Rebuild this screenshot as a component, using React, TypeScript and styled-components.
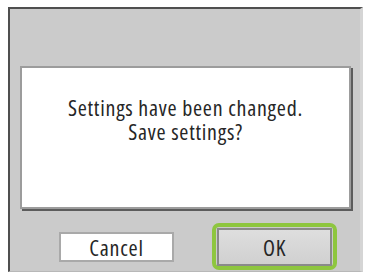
import React from "react";
import styled, { createGlobalStyle } from "styled-components";

const Global = createGlobalStyle`
  html, body { margin: 0; padding: 0; background: #ffffff; }
  body { font-family: "Open Sans", "DejaVu Sans", sans-serif; }
`;

const Screen = styled.div`
  box-sizing: border-box;
  margin: 7px 0 0 8px;
  width: 355px;
  height: 265px;
  background: #cbcbcb;
  border-left: 2px solid #4f4f4f;
  border-top: 2px solid #4f4f4f;
  border-right: 3px solid #d5d5d5;
  border-bottom: 1px solid #b8b8b8;
  padding: 57px 7px 0 10px;
  display: flex;
  flex-direction: column;
`;

const Dialog = styled.div`
  box-sizing: border-box;
  width: 331px;
  height: 143px;
  background: #ffffff;
  border: 2px solid #9c9c9c;
  box-shadow: 2px 2px 0 #5c5c5c;
  padding-top: 27px;
  text-align: center;
`;

const Message = styled.p`
  margin: 0;
  white-space: nowrap;
  color: #262626;
  font-family: "Open Sans", "DejaVu Sans", sans-serif;
  font-stretch: condensed;
  font-size: 22px;
  letter-spacing: 0.75px;
  line-height: 24px;
`;

const ButtonRow = styled.div`
  margin-top: 14px;
  height: 47px;
  display: flex;
  align-items: center;
  padding-left: 39px;
  gap: 38px;
`;

const Button = styled.div<{ $selected?: boolean }>`
  box-sizing: border-box;
  display: flex;
  align-items: center;
  justify-content: center;
  font-family: "Open Sans", "DejaVu Sans", sans-serif;
  font-stretch: condensed;
  font-size: 22px;
  letter-spacing: 0.75px;
  color: #262626;
  width: 115px;
  height: ${(p) => (p.$selected ? "38px" : "30px")};
  background: ${(p) => (p.$selected ? "linear-gradient(#dedede, #d0d0d0)" : "#ffffff")};
  border: 2px solid ${(p) => (p.$selected ? "#8a8a8a" : "#a9a9a9")};
`;

const Focus = styled.div`
  box-sizing: border-box;
  width: 125px;
  height: 47px;
  border: 4px solid #8ec63f;
  border-radius: 7px;
  display: flex;
  align-items: center;
  justify-content: center;
  background: #cbcbcb;
`;

export default function App() {
  return (
    <>
      <Global />
      <Screen>
        <Dialog>
          <Message>
            Settings have been changed.
            <br />
            Save settings?
          </Message>
        </Dialog>
        <ButtonRow>
          <Button>Cancel</Button>
          <Focus>
            <Button $selected>OK</Button>
          </Focus>
        </ButtonRow>
      </Screen>
    </>
  );
}
